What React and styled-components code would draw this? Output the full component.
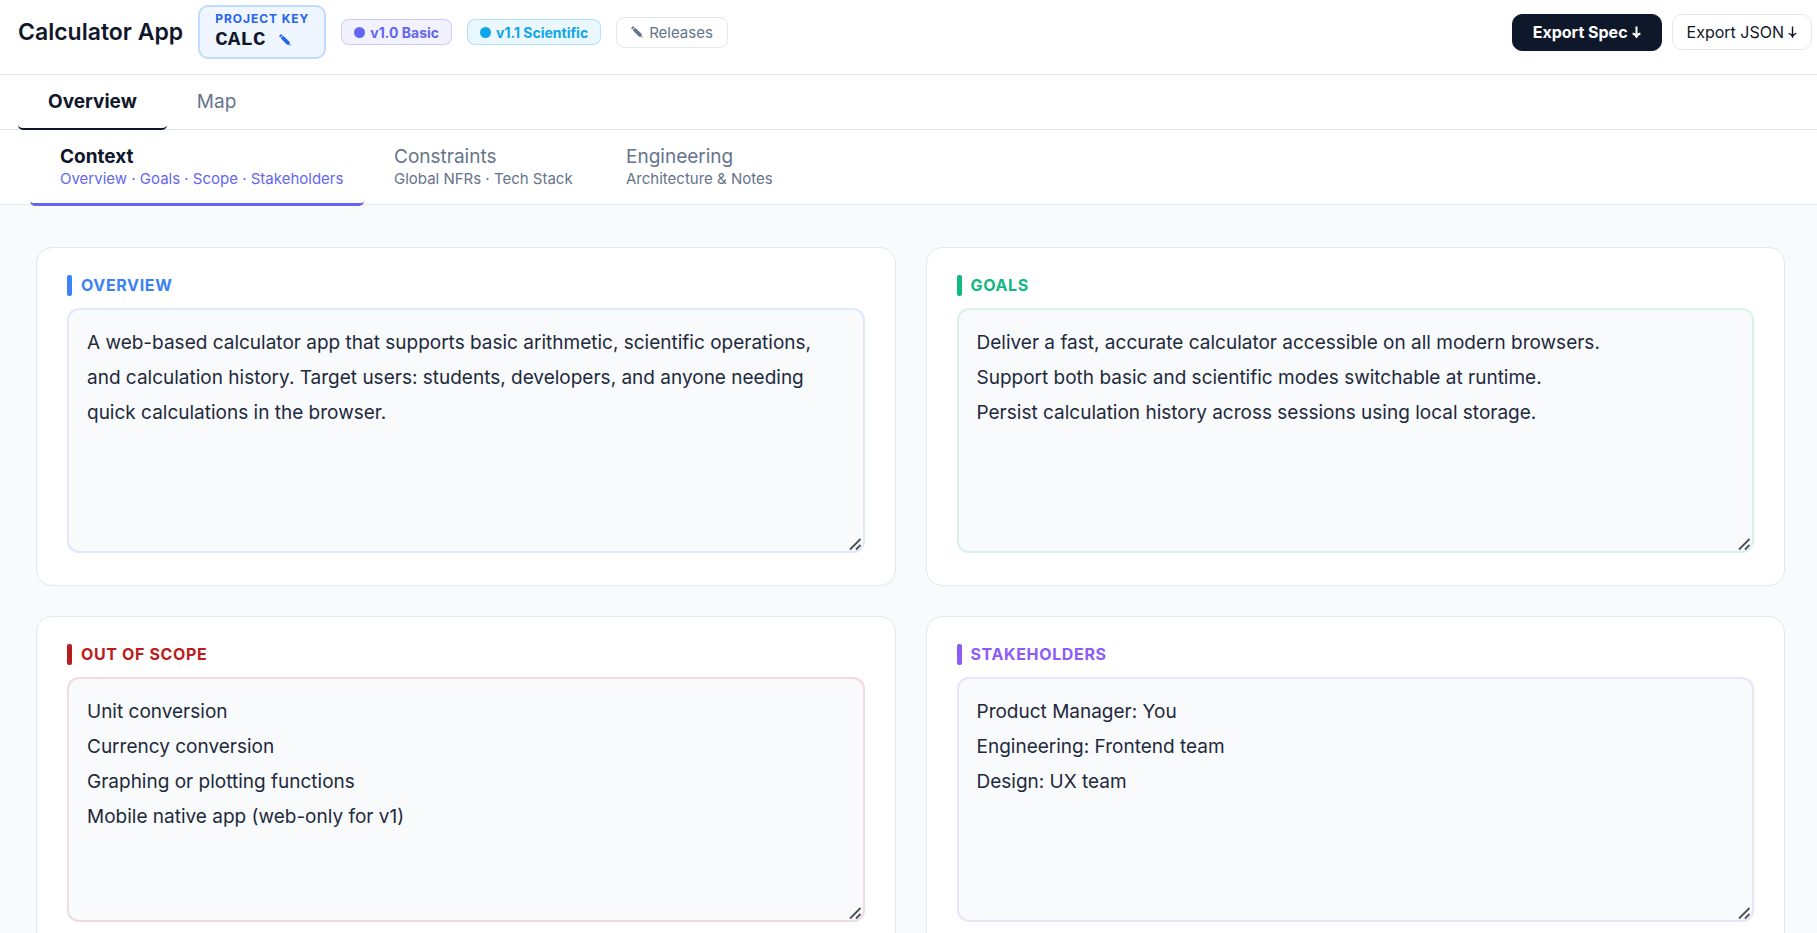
import React, { useState } from 'react'
import styled, { createGlobalStyle } from 'styled-components'

const panels = [
  {
    id: 'overview',
    title: 'Overview',
    color: '#3b82f6',
    text: 'A web-based calculator app that supports basic arithmetic, scientific operations, and calculation history. Target users: students, developers, and anyone needing quick calculations in the browser.',
  },
  {
    id: 'goals',
    title: 'Goals',
    color: '#10b981',
    text: 'Deliver a fast, accurate calculator accessible on all modern browsers.\nSupport both basic and scientific modes switchable at runtime.\nPersist calculation history across sessions using local storage.',
  },
  {
    id: 'scope',
    title: 'Out of Scope',
    color: '#b91c1c',
    text: 'Unit conversion\nCurrency conversion\nGraphing or plotting functions\nMobile native app (web-only for v1)',
  },
  {
    id: 'stakeholders',
    title: 'Stakeholders',
    color: '#8b5cf6',
    text: 'Product Manager: You\nEngineering: Frontend team\nDesign: UX team',
  },
]

const sections = [
  { name: 'Context', hint: 'Overview · Goals · Scope · Stakeholders', width: 334 },
  { name: 'Constraints', hint: 'Global NFRs · Tech Stack', width: 232 },
  { name: 'Engineering', hint: 'Architecture & Notes', width: 208 },
]

const Pencil = () => (
  <svg width="12" height="12" viewBox="0 0 12 12" fill="currentColor" aria-hidden="true">
    <path d="M0.3 1.9 1.9 0.3Q2.3 0 2.7 0.4L3.6 1.3 1.3 3.6 0.4 2.7Q0 2.3 0.3 1.9Z" />
    <path d="M1.7 4.2 4.2 1.7 10.5 7.8 10.9 9.9 9.9 10.9 7.8 10.5Z" />
    <path d="M10.4 11.2 11.2 10.4 11.9 11.9Z" />
  </svg>
)

const Arrow = ({ bold }) => (
  <svg width="9" height="12" viewBox="0 0 9 12" fill="none" stroke="currentColor" strokeWidth={bold ? 2 : 1.4} aria-hidden="true">
    <path d="M4.5 0.5V10.5M0.6 7.4Q3.6 8 4.5 10.8Q5.4 8 8.4 7.4" />
  </svg>
)

const App = () => {
  const [tab, setTab] = useState('Overview')
  const [section, setSection] = useState('Context')

  return (
    <>
      <GlobalStyle />
      <Header>
        <Title>Calculator App</Title>
        <ProjectKey type="button">
          <KeyLabel>PROJECT KEY</KeyLabel>
          <KeyValue>CALC <Pencil /></KeyValue>
        </ProjectKey>
        <Release $color="#6366f1"><Dot />v1.0 Basic</Release>
        <Release $color="#0ea5e9"><Dot />v1.1 Scientific</Release>
        <ReleasesButton type="button"><Pencil />Releases</ReleasesButton>
        <Actions>
          <PrimaryButton type="button">Export Spec<Arrow bold /></PrimaryButton>
          <ExportButton type="button">Export JSON<Arrow /></ExportButton>
        </Actions>
      </Header>

      <Tabs>
        {['Overview', 'Map'].map((name) => (
          <Tab key={name} type="button" $active={tab === name} onClick={() => setTab(name)}>
            {name}
          </Tab>
        ))}
      </Tabs>

      <Sections>
        {sections.map(({ name, hint, width }) => (
          <SectionTab
            key={name}
            type="button"
            $active={section === name}
            $width={width}
            onClick={() => setSection(name)}
          >
            {name}
            <Hint $active={section === name}>{hint}</Hint>
          </SectionTab>
        ))}
      </Sections>

      <Main>
        {panels.map(({ id, title, color, text }) => (
          <Card key={id}>
            <CardLabel htmlFor={id} $color={color}>{title}</CardLabel>
            <Field id={id} $color={color} defaultValue={text} spellCheck={false} />
          </Card>
        ))}
      </Main>
    </>
  )
}

export default App

const GlobalStyle = createGlobalStyle`
    * {
        box-sizing: border-box;
    }

    body {
        margin: 0;
        background-color: #f8fafc;
        color: #0f172a;
        font-family: Inter, "Liberation Sans", sans-serif;
    }

    button, textarea {
        font-family: inherit;
        color: inherit;
    }

    button {
        cursor: pointer;
    }
`
const Header = styled.header`
    display: flex;
    align-items: center;
    gap: 15px;
    padding: 5px 5px 15px 18px;
    background-color: #fff;
    border-bottom: 1px solid #e2e8f0;
`
const Title = styled.h1`
    margin: 0;
    font-size: 23px;
    font-weight: 600;
    line-height: 30px;
    white-space: nowrap;
`
const ProjectKey = styled.button`
    display: flex;
    flex-direction: column;
    padding: 5px 15px;
    background-color: #eff6ff;
    border: 2px solid #bfdbfe;
    border-radius: 10px;
    text-align: left;
`
const KeyLabel = styled.span`
    color: #2563eb;
    font-size: 12px;
    font-weight: 700;
    line-height: 14px;
    letter-spacing: 0.08em;
`
const KeyValue = styled.span`
    display: flex;
    align-items: center;
    gap: 13px;
    font-family: "Liberation Mono", monospace;
    font-size: 21px;
    font-weight: 700;
    line-height: 28px;
    margin-bottom: -2px;

    svg {
        color: #2563eb;
    }
`
const Release = styled.span`
    display: flex;
    align-items: center;
    gap: 5px;
    height: 26px;
    padding: 0px 12px;
    color: ${({ $color }) => $color};
    background-color: ${({ $color }) => $color}16;
    border: 1px solid ${({ $color }) => $color}44;
    border-radius: 8px;
    font-size: 14px;
    font-weight: 700;
    white-space: nowrap;
`
const Dot = styled.i`
    width: 11px;
    height: 11px;
    border-radius: 50%;
    background-color: currentColor;
`
const ReleasesButton = styled.button`
    display: flex;
    align-items: center;
    gap: 6px;
    height: 31px;
    padding: 0px 14px;
    background-color: #fff;
    border: 1px solid #e2e8f0;
    border-radius: 8px;
    font-size: 15px;

    && {
        color: #64748b;
    }
`
const Actions = styled.div`
    display: flex;
    align-items: center;
    gap: 10px;
    margin-left: auto;
`
const ExportButton = styled.button`
    display: flex;
    align-items: center;
    gap: 4px;
    height: 36px;
    padding: 0px 14px;
    background-color: #fff;
    border: 1px solid #e2e8f0;
    border-radius: 10px;
    font-size: 16px;
    white-space: nowrap;
`
const PrimaryButton = styled(ExportButton)`
    height: 37px;
    padding: 0px 20px;
    background-color: #0f172a;
    border-color: #0f172a;
    font-weight: 700;

    && {
        color: #fff;
    }
`
const Tabs = styled.nav`
    display: flex;
    padding-left: 18px;
    background-color: #fff;
    border-bottom: 1px solid #e2e8f0;
`
const Tab = styled.button`
    height: 55px;
    margin-bottom: -1px;
    padding: 0px 30px;
    background: none;
    border: none;
    border-bottom: 2px solid ${({ $active }) => ($active ? '#0f172a' : 'transparent')};
    border-radius: 5px;
    font-size: 19px;
    font-weight: ${({ $active }) => ($active ? 700 : 400)};

    && {
        color: ${({ $active }) => ($active ? '#0f172a' : '#64748b')};
    }
`
const Sections = styled(Tabs)`
    padding-left: 30px;
`
const SectionTab = styled(Tab)`
    height: auto;
    min-width: ${({ $width }) => $width}px;
    margin-bottom: -2px;
    padding: 15px 20px 14px 30px;
    border-bottom: 3px solid ${({ $active }) => ($active ? '#6366f1' : 'transparent')};
    line-height: 24px;
    text-align: left;
`
const Hint = styled.span`
    display: block;
    color: ${({ $active }) => ($active ? '#6366f1' : '#64748b')};
    font-size: 15px;
    font-weight: 400;
    line-height: 20px;
    white-space: nowrap;
`
const Main = styled.main`
    display: grid;
    grid-template-columns: 1fr 1fr;
    gap: 30px;
    padding: 42px 32px 42px 36px;

    @media (max-width:767px){
        grid-template-columns: 1fr;
        padding: 20px;
    }
`
const Card = styled.section`
    display: flex;
    flex-direction: column;
    gap: 12px;
    padding: 27px 30px 32px;
    background-color: #fff;
    border: 1px solid #e2e8f0;
    border-radius: 16px;
`
const CardLabel = styled.label`
    display: flex;
    align-items: center;
    gap: 9px;
    color: ${({ $color }) => $color};
    font-size: 16px;
    font-weight: 700;
    line-height: 21px;
    letter-spacing: 0.04em;
    text-transform: uppercase;

    &::before {
        content: '';
        width: 5px;
        height: 21px;
        border-radius: 2px;
        background-color: currentColor;
    }
`
const grip = encodeURIComponent(
  '<svg xmlns="http://www.w3.org/2000/svg" width="15" height="15" fill="none" stroke="#4b4f56" stroke-width="1.8"><path d="M2 13.5 12.5 3M8 13.5 12.5 9"/></svg>'
)

const Field = styled.textarea`
    display: block;
    width: 100%;
    height: 245px;
    padding: 15px 18px;
    background-color: #f8fafc;
    border: 2px solid ${({ $color }) => $color}22;
    border-radius: 12px;
    font-size: 19px;
    line-height: 35px;
    resize: vertical;
    outline: none;

    && {
        color: #1e293b;
    }

    &::-webkit-resizer {
        background: url("data:image/svg+xml,${grip}") no-repeat right bottom;
    }
`
